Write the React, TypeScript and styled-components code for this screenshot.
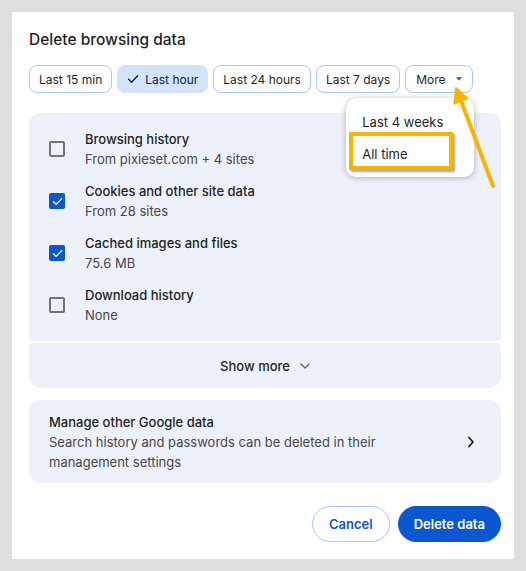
import React from 'react';
import styled, { createGlobalStyle } from 'styled-components';

const GlobalStyle = createGlobalStyle`
	html, body {
		margin: 0;
		padding: 0;
		background: #dfdfdf;
		font-family: Inter, "Noto Sans", "Liberation Sans", sans-serif;
		color: #1f1f1f;
	}
`;

const ranges = ['Last 15 min', 'Last hour', 'Last 24 hours', 'Last 7 days'];

const items = [
	{ title: 'Browsing history', sub: 'From pixieset.com + 4 sites', checked: false },
	{ title: 'Cookies and other site data', sub: 'From 28 sites', checked: true },
	{ title: 'Cached images and files', sub: '75.6 MB', checked: true },
	{ title: 'Download history', sub: 'None', checked: false },
];

function CheckIcon({ color, size = 12 }: { color: string; size?: number }) {
	return (
		<svg width={size} height={size} viewBox="0 0 12 12" fill="none">
			<path d="M1.5 6.2 L4.6 9.2 L10.6 2.8" stroke={color} strokeWidth={1.4} strokeLinecap="round" strokeLinejoin="round" />
		</svg>
	);
}

function Checkbox({ checked }: { checked: boolean }) {
	return (
		<CheckBox $checked={checked}>
			{checked ? <CheckIcon color="#ffffff" size={11} /> : null}
		</CheckBox>
	);
}

export default function App() {
	return (
		<Page>
			<GlobalStyle />
			<Card>
				<Title>Delete browsing data</Title>
				<ChipRow>
					{ranges.map(r => (
						<Chip key={r} $selected={r === 'Last hour'}>
							{r === 'Last hour' ? <CheckIcon color="#041e49" /> : null}
							{r}
						</Chip>
					))}
					<MoreWrap>
						<MoreChip>
							More
							<svg width="6" height="4" viewBox="0 0 6 4">
								<path d="M0 0.3 L6 0.3 L3 3.6 Z" fill="#0b57d0" />
							</svg>
						</MoreChip>
						<Menu>
							<MenuItem>Last 4 weeks</MenuItem>
							<MenuItem>All time</MenuItem>
							<Highlight />
						</Menu>
					</MoreWrap>
				</ChipRow>

				<DataPanel>
					{items.map(item => (
						<DataRow key={item.title}>
							<Checkbox checked={item.checked} />
							<RowText>
								<RowTitle>{item.title}</RowTitle>
								<RowSub>{item.sub}</RowSub>
							</RowText>
						</DataRow>
					))}
				</DataPanel>
				<ShowMore>
					Show more
					<svg width="10" height="6" viewBox="0 0 10 6" fill="none">
						<path d="M1 1 L5 5 L9 1" stroke="#5f6368" strokeWidth={1.3} strokeLinecap="round" strokeLinejoin="round" />
					</svg>
				</ShowMore>

				<ManagePanel>
					<RowText>
						<RowTitle>Manage other Google data</RowTitle>
						<RowSub>Search history and passwords can be deleted in their management settings</RowSub>
					</RowText>
					<svg width="8" height="12" viewBox="0 0 8 12" fill="none">
						<path d="M2 1.5 L6 6 L2 10.5" stroke="#1f1f1f" strokeWidth={1.8} strokeLinecap="round" strokeLinejoin="round" />
					</svg>
				</ManagePanel>

				<Footer>
					<Button $primary={false}>Cancel</Button>
					<Button $primary>Delete data</Button>
				</Footer>

				<ArrowMark width="502" height="547" viewBox="0 0 502 547">
					<line x1="481" y1="174" x2="448" y2="86" stroke="#f7b500" strokeWidth={4} strokeLinecap="round" />
					<polygon points="444,76 455.4,86.6 442.4,91.6" fill="#f7b500" stroke="#f7b500" strokeWidth={2} strokeLinejoin="round" />
				</ArrowMark>
			</Card>
		</Page>
	);
}

const Page = styled.div`
	padding: 12px;
	width: 502px;
`;

const Card = styled.div`
	position: relative;
	background: #ffffff;
	width: 502px;
	height: 547px;
	box-sizing: border-box;
	padding: 17px 13px 0 17px;
	display: flex;
	flex-direction: column;
`;

const Title = styled.div`
	font-size: 15.5px;
	line-height: 22px;
	font-weight: 500;
	color: #1f1f1f;
`;

const ChipRow = styled.div`
	display: flex;
	gap: 5px;
	margin-top: 14px;
`;

const Chip = styled.div<{ $selected: boolean }>`
	height: 28px;
	box-sizing: border-box;
	display: flex;
	align-items: center;
	gap: 6px;
	padding: 0 9px;
	border-radius: 8px;
	font-size: 12px;
	white-space: nowrap;
	border: 1px solid ${p => (p.$selected ? '#d3e3fd' : '#a8c7fa')};
	background: ${p => (p.$selected ? '#d3e3fd' : '#ffffff')};
	color: ${p => (p.$selected ? '#041e49' : '#1f1f1f')};
`;

const MoreChip = styled(Chip).attrs({ $selected: false })`
	width: 68px;
	padding: 0 0 0 10px;
	gap: 10px;
`;

const MoreWrap = styled.div`
	position: relative;
`;

const Menu = styled.div`
	position: absolute;
	left: -59px;
	top: 33px;
	width: 128px;
	box-sizing: border-box;
	padding: 8px 0 7px;
	background: #ffffff;
	border-radius: 10px;
	box-shadow: 0 1px 6px rgba(0, 0, 0, 0.28);
	z-index: 3;
`;

const MenuItem = styled.div`
	height: 32px;
	display: flex;
	align-items: center;
	padding-left: 16px;
	font-size: 13px;
	color: #1f1f1f;
`;

const Highlight = styled.div`
	position: absolute;
	left: 3px;
	top: 34px;
	width: 104px;
	height: 38px;
	box-sizing: border-box;
	border: 4px solid #f7b500;
	box-shadow: 2px 2px 2px rgba(0, 0, 0, 0.35);
`;

const DataPanel = styled.div`
	margin-top: 20px;
	background: #edf2fa;
	border-radius: 12px 12px 4px 4px;
	padding: 16px 20px;
	display: flex;
	flex-direction: column;
	gap: 12px;
`;

const DataRow = styled.div`
	display: flex;
	align-items: center;
	gap: 20px;
`;

const CheckBox = styled.div<{ $checked: boolean }>`
	width: 16px;
	height: 16px;
	box-sizing: border-box;
	border-radius: 2px;
	flex-shrink: 0;
	display: flex;
	align-items: center;
	justify-content: center;
	border: 2px solid ${p => (p.$checked ? '#0b57d0' : '#737373')};
	background: ${p => (p.$checked ? '#0b57d0' : 'transparent')};
`;

const RowText = styled.div`
	display: flex;
	flex-direction: column;
	flex: 1;
`;

const RowTitle = styled.div`
	font-size: 13px;
	line-height: 20px;
	font-weight: 500;
	color: #1f1f1f;
`;

const RowSub = styled.div`
	font-size: 13px;
	line-height: 20px;
	color: #474747;
	max-width: 360px;
`;

const ShowMore = styled.div`
	margin-top: 2px;
	height: 45px;
	background: #edf2fa;
	border-radius: 4px 4px 12px 12px;
	display: flex;
	align-items: center;
	justify-content: center;
	gap: 10px;
	font-size: 13px;
	font-weight: 500;
	color: #1f1f1f;
`;

const ManagePanel = styled.div`
	margin-top: 12px;
	background: #edf2fa;
	border-radius: 12px;
	padding: 12px 26px 11px 20px;
	display: flex;
	align-items: center;
`;

const Footer = styled.div`
	margin-top: 23px;
	display: flex;
	justify-content: flex-end;
	gap: 8px;
`;

const Button = styled.div<{ $primary: boolean }>`
	height: 36px;
	box-sizing: border-box;
	padding: 0 ${p => (p.$primary ? 15 : 16)}px;
	border-radius: 18px;
	display: flex;
	align-items: center;
	font-size: 13px;
	font-weight: 600;
	border: 1px solid ${p => (p.$primary ? '#0b57d0' : '#a8c7fa')};
	background: ${p => (p.$primary ? '#0b57d0' : '#ffffff')};
	color: ${p => (p.$primary ? '#ffffff' : '#0b57d0')};
`;

const ArrowMark = styled.svg`
	position: absolute;
	left: 0;
	top: 0;
	pointer-events: none;
	z-index: 4;
`;
